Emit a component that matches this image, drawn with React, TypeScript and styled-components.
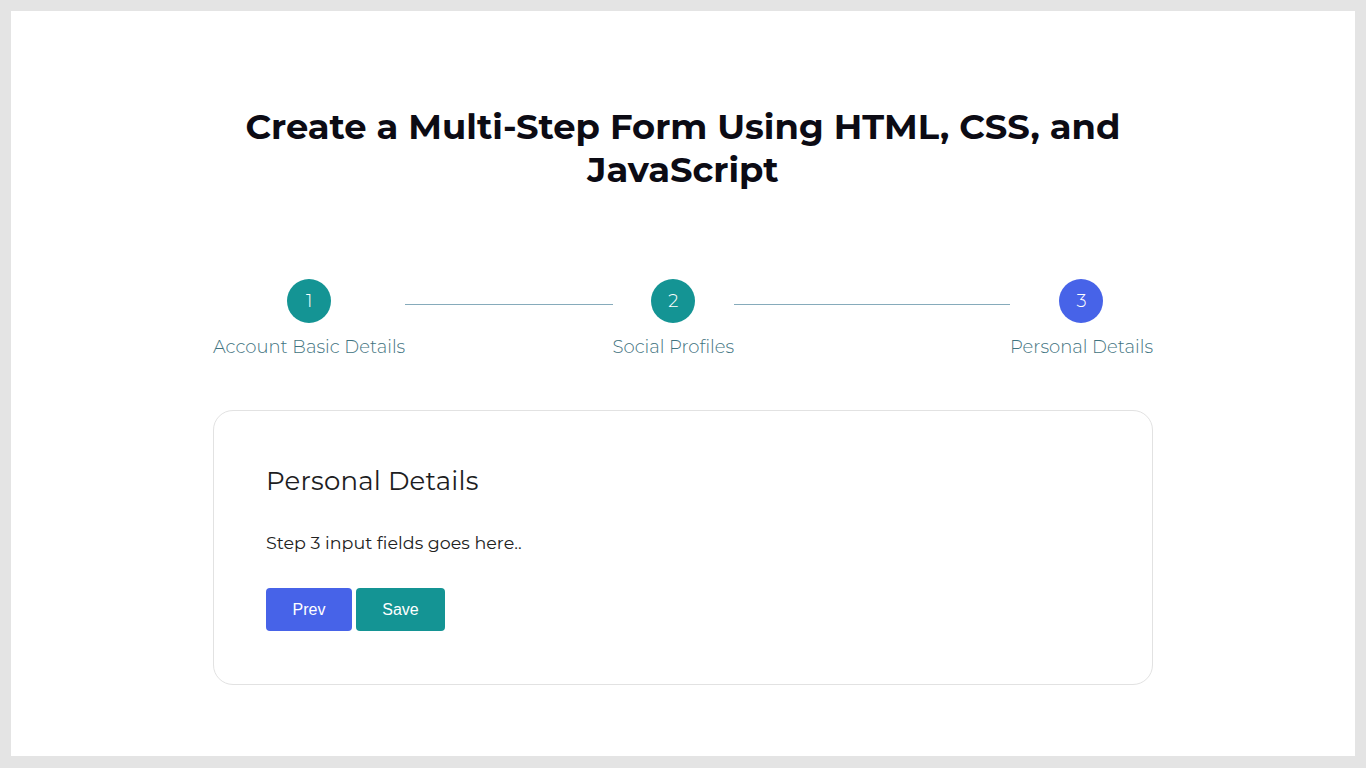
import React from "react";
import styled, { createGlobalStyle } from "styled-components";

const Global = createGlobalStyle`
  html, body { margin: 0; padding: 0; }
  body {
    background: #e4e4e4;
    font-family: "Montserrat", "Open Sans", "Noto Sans", sans-serif;
  }
`;

const Frame = styled.div`
  margin: 11px;
  height: 745px;
  background: #ffffff;
  display: flex;
  flex-direction: column;
  align-items: center;
`;

const Column = styled.div`
  width: 940px;
  display: flex;
  flex-direction: column;
  padding-top: 94px;
`;

const Title = styled.h1`
  margin: 0;
  text-align: center;
  font-size: 35.3px;
  font-weight: 700;
  line-height: 43px;
  color: #0c0b14;
`;

const Steps = styled.div`
  display: flex;
  align-items: flex-start;
  margin-top: 88px;
`;

const Step = styled.div`
  display: flex;
  flex-direction: column;
  align-items: center;
`;

const Circle = styled.div<{ $active?: boolean }>`
  width: 44px;
  height: 44px;
  border-radius: 50%;
  background: ${(p) => (p.$active ? "#4763e8" : "#149494")};
  color: #fff;
  display: flex;
  align-items: center;
  justify-content: center;
  font-size: 18px;
  font-weight: 300;
`;

const Label = styled.div`
  margin-top: 12px;
  font-size: 18px;
  line-height: 24px;
  font-weight: 300;
  color: #3f7380;
  white-space: nowrap;
`;

const Line = styled.div<{ $grow: number }>`
  flex: ${(p) => p.$grow} 1 0;
  height: 1px;
  background: #86abbb;
  margin-top: 25px;
`;

const Card = styled.div`
  margin-top: 51px;
  border: 1px solid #e2e2e2;
  border-radius: 20px;
  padding: 52px 53px 53px 52px;
`;

const CardTitle = styled.h2`
  margin: 0;
  font-size: 26px;
  font-weight: 400;
  line-height: 36px;
  letter-spacing: 0.2px;
  color: #1d1d22;
`;

const Text = styled.p`
  margin: 31px 0 0;
  font-size: 17.5px;
  line-height: 25px;
  color: #222;
`;

const Buttons = styled.div`
  display: flex;
  gap: 4px;
  margin-top: 33px;
`;

const Button = styled.button<{ $variant: "prev" | "save"; $w: number }>`
  width: ${(p) => p.$w}px;
  height: 43px;
  border: none;
  border-radius: 4px;
  background: ${(p) => (p.$variant === "prev" ? "#4763e8" : "#149494")};
  color: #fff;
  font-family: "Liberation Sans", Arial, sans-serif;
  font-size: 16px;
  cursor: pointer;
`;

export default function App() {
  return (
    <>
      <Global />
      <Frame>
        <Column>
          <Title>
            Create a Multi-Step Form Using HTML, CSS, and
            <br />
            JavaScript
          </Title>
          <Steps>
            <Step>
              <Circle>1</Circle>
              <Label>Account Basic Details</Label>
            </Step>
            <Line $grow={209} />
            <Step>
              <Circle>2</Circle>
              <Label>Social Profiles</Label>
            </Step>
            <Line $grow={278} />
            <Step>
              <Circle $active>3</Circle>
              <Label>Personal Details</Label>
            </Step>
          </Steps>
          <Card>
            <CardTitle>Personal Details</CardTitle>
            <Text>Step 3 input fields goes here..</Text>
            <Buttons>
              <Button $variant="prev" $w={86}>Prev</Button>
              <Button $variant="save" $w={89}>Save</Button>
            </Buttons>
          </Card>
        </Column>
      </Frame>
    </>
  );
}
